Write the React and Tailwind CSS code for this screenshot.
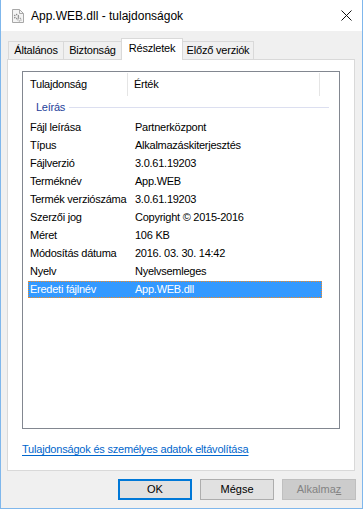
import React from 'react';

const rows = [
  ['Fájl leírása', 'Partnerközpont'],
  ['Típus', 'Alkalmazáskiterjesztés'],
  ['Fájlverzió', '3.0.61.19203'],
  ['Terméknév', 'App.WEB'],
  ['Termék verziószáma', '3.0.61.19203'],
  ['Szerzői jog', 'Copyright © 2015-2016'],
  ['Méret', '106 KB'],
  ['Módosítás dátuma', '2016. 03. 30. 14:42'],
  ['Nyelv', 'Nyelvsemleges'],
  ['Eredeti fájlnév', 'App.WEB.dll'],
];

const DllIcon = () => (
  <svg width="12" height="14" viewBox="0 0 12 14">
    <path d="M0.5 0.5h7l4 4v9h-11z" fill="#f4f4f4" stroke="#a8a8a8" />
    <path d="M7.5 0.5v4h4" fill="none" stroke="#a8a8a8" />
    <circle cx="4.5" cy="7.5" r="2" fill="none" stroke="#8a8a8a" strokeWidth="1.4" strokeDasharray="1.2 0.8" />
    <circle cx="7.5" cy="10.5" r="1.5" fill="none" stroke="#9a9a9a" strokeWidth="1.2" strokeDasharray="1 0.7" />
  </svg>
);

const Tab = ({ label, className }) => (
  <div className={`flex items-center justify-center text-[11px] tracking-[-0.2px] border-[#d9d9d9] ${className}`}>
    {label}
  </div>
);

export default function App() {
  return (
    <div
      className="w-[363px] h-[509px] flex flex-col border-x border-b border-[#7fb7ec] bg-[#f0f0f0] text-black"
      style={{ fontFamily: '"Liberation Sans", Arial, sans-serif' }}
    >
      {/* Title bar */}
      <div className="h-[31px] bg-white flex items-center pl-[11px] pr-[10px] shrink-0">
        <DllIcon />
        <span className="ml-[7px] text-[12px] pt-px">App.WEB.dll - tulajdonságok</span>
        <svg className="ml-auto" width="11" height="11" viewBox="0 0 11 11">
          <path d="M0.5 0.5l10 10M10.5 0.5l-10 10" stroke="#111" strokeWidth="1" />
        </svg>
      </div>

      {/* Tabs */}
      <div className="flex items-end h-[28px] pl-[7px] shrink-0">
        <Tab label="Általános" className="w-[55px] h-[18px] border-l border-t" />
        <Tab label="Biztonság" className="w-[58px] h-[18px] border-l border-t" />
        <Tab label="Részletek" className="w-[62px] h-[22px] border-x border-t bg-white relative z-10 -mb-px pb-[2px]" />
        <Tab label="Előző verziók" className="w-[71px] h-[18px] border-r border-t" />
      </div>

      {/* Panel */}
      <div className="ml-[6px] w-[348px] h-[412px] border border-[#d9d9d9] bg-white pt-[11px] pl-[14px] shrink-0">
        <div className="w-[318px] h-[358px] border border-[#828790] text-[11px] tracking-[-0.25px]">
          {/* Header */}
          <div className="flex h-[25px] items-center">
            <div className="w-[105px] h-[23px] flex items-center pl-[7px] border-r border-[#e5e5e5]">Tulajdonság</div>
            <div className="w-[192px] h-[23px] flex items-center pl-[6px] border-r border-[#e5e5e5]">Érték</div>
          </div>
          {/* Group */}
          <div className="flex items-center h-[21px] pl-[13px] pr-[10px]">
            <span className="text-[#1e3e9a]">Leírás</span>
            <div className="flex-1 h-px bg-[#dcdff0] ml-[4px]" />
          </div>
          {/* Rows */}
          {rows.map(([name, value], i) => {
            const sel = i === rows.length - 1;
            return (
              <div key={name} className="h-[18px] flex items-center pl-[5px]">
                <div
                  className={`w-[294px] h-[17px] flex items-center ${
                    sel ? 'bg-[#3399ff] text-white border border-dotted border-[#f08a24]' : 'border border-transparent'
                  }`}
                >
                  <span className="w-[106px] pl-px whitespace-nowrap">{name}</span>
                  <span className="whitespace-nowrap">{value}</span>
                </div>
              </div>
            );
          })}
        </div>
        <div className="mt-[12px] text-[11px] tracking-[-0.2px] text-[#0066cc] underline underline-offset-2">
          Tulajdonságok és személyes adatok eltávolítása
        </div>
      </div>

      {/* Buttons */}
      <div className="flex justify-end gap-[8px] pr-[6px] mt-[8px] text-[11px]">
        <button className="w-[74px] h-[21px] bg-[#e1e1e1] border-2 border-[#0078d7]">OK</button>
        <button className="w-[74px] h-[21px] bg-[#e1e1e1] border border-[#adadad]">Mégse</button>
        <button className="w-[74px] h-[21px] bg-[#cccccc] border border-[#bfbfbf] text-[#838383]">
          Alkalma<span className="underline">z</span>
        </button>
      </div>
    </div>
  );
}
